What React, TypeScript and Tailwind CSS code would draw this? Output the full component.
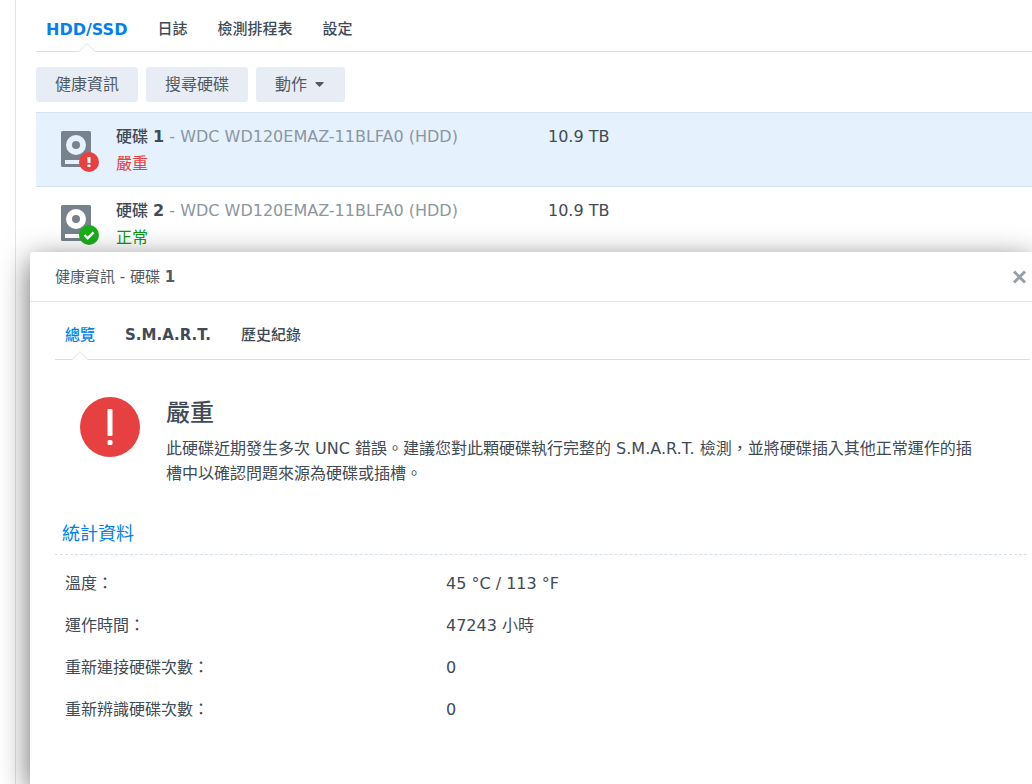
import React, { useState } from 'react';

type Status = 'critical' | 'normal';

interface Disk {
  id: number;
  model: string;
  size: string;
  status: Status;
}

interface TabItem {
  label: string;
  className?: string;
}

const disks: Disk[] = [
  { id: 1, model: 'WDC WD120EMAZ-11BLFA0 (HDD)', size: '10.9 TB', status: 'critical' },
  { id: 2, model: 'WDC WD120EMAZ-11BLFA0 (HDD)', size: '10.9 TB', status: 'normal' },
];

const stats = [
  { label: '溫度：', value: '45 °C / 113 °F' },
  { label: '運作時間：', value: '47243 小時' },
  { label: '重新連接硬碟次數：', value: '0' },
  { label: '重新辨識硬碟次數：', value: '0' },
];

const pageTabs: TabItem[] = [
  { label: 'HDD/SSD', className: 'text-base font-bold' },
  { label: '日誌' },
  { label: '檢測排程表' },
  { label: '設定' },
];

const dialogTabs: TabItem[] = [
  { label: '總覽' },
  { label: 'S.M.A.R.T.', className: 'text-[15px] font-bold' },
  { label: '歷史紀錄' },
];

const DiskIcon: React.FC<{ status: Status }> = ({ status }) => (
  <svg width="40" height="42" viewBox="0 0 40 42" aria-hidden="true">
    {/* platter ring and label strip are cut out so the row colour shows through */}
    <path
      fillRule="evenodd"
      fill="#78828c"
      d="M2.500 1h27a1.500 1.500 0 0 1 1.500 1.500v33a1.500 1.500 0 0 1-1.500 1.500h-27a1.500 1.500 0 0 1-1.500-1.500v-33a1.500 1.500 0 0 1 1.500-1.500zM16 5a10 10 0 1 0 0 20a10 10 0 1 0 0-20zM5 30v4h22v-4z"
    />
    <circle cx="16" cy="15" r="4" fill="#78828c" />
    {status === 'critical' ? (
      <>
        <circle cx="29" cy="32" r="10" fill="#e64040" />
        <rect x="27.500" y="27" width="3" height="6" rx="0.5" fill="#fff" />
        <rect x="27.500" y="34.500" width="3" height="2.500" rx="0.5" fill="#fff" />
      </>
    ) : (
      <>
        <circle cx="29" cy="31" r="10" fill="#19af19" />
        <path d="M24.500 31l3.200 3.200 5.800-5.800" fill="none" stroke="#fff" strokeWidth="2.4" />
      </>
    )}
  </svg>
);

const Tabs: React.FC<{ items: TabItem[]; className?: string }> = ({ items, className = '' }) => {
  const [active, setActive] = useState(0);

  return (
    <div role="tablist" className={`flex border-b border-[#d7e1eb] px-[10px] ${className}`}>
      {items.map((item, i) => (
        <button
          key={item.label}
          role="tab"
          aria-selected={i === active}
          onClick={() => setActive(i)}
          className={`relative flex h-full items-center ${item.className ?? 'text-[15px] font-medium'} ${i === active ? 'text-[#057feb]' : 'text-[#414b55]'}`}
        >
          {item.label}
          {i === active && (
            <svg
              className="absolute -bottom-px left-1/2 -translate-x-1/2"
              width="18"
              height="10"
              viewBox="0 0 18 10"
              aria-hidden="true"
            >
              <path d="M1.500 9.500h15" stroke="#fff" />
              <path d="M0 9.500h1L9 1.500l8 8h1" fill="#fff" stroke="#d7e1eb" />
            </svg>
          )}
        </button>
      ))}
    </div>
  );
};

const ToolbarButton: React.FC<{ children: React.ReactNode }> = ({ children }) => (
  <button className="flex h-[35px] items-center rounded-[3px] bg-[#e8edf5] px-[19px] text-[#505a64]">
    {children}
  </button>
);

const DiskTable: React.FC = () => (
  <table className="w-full table-fixed border-collapse">
    <colgroup>
      <col className="w-20" />
      <col className="w-[432px]" />
      <col />
    </colgroup>
    <tbody>
      {disks.map((disk) => (
        <tr
          key={disk.id}
          className={`h-[74px] border-y border-[#d2e2ee] align-top ${disk.id === 1 ? 'bg-[#e5f1fd]' : 'bg-white'}`}
        >
          <td className="pt-[17px] pl-6">
            <DiskIcon status={disk.status} />
          </td>
          <td className="pt-[10px] leading-[27px]">
            <div className="whitespace-nowrap text-[#8c96a0]">
              <span className="font-medium text-[#414b55]">
                硬碟 <b>{disk.id}</b>
              </span>{' '}
              - {disk.model}
            </div>
            <div className={disk.status === 'critical' ? 'text-[#e64040]' : 'text-[#0c9b0c]'}>
              {disk.status === 'critical' ? '嚴重' : '正常'}
            </div>
          </td>
          <td className="pt-[10px] leading-[27px]">{disk.size}</td>
        </tr>
      ))}
    </tbody>
  </table>
);

const HealthDialog: React.FC = () => (
  <section
    role="dialog"
    aria-labelledby="health-title"
    className="absolute top-[252px] right-0 bottom-0 left-[30px] rounded-tl-[3px] bg-white shadow-[0_8px_30px_rgba(0,0,0,0.6)]"
  >
    <header className="flex h-[50px] items-center justify-between border-b border-[#e1e6eb] pr-[5px] pl-[25px]">
      <h2 id="health-title" className="pt-[2px] text-[15px] text-[#505a64]">
        健康資訊 - 硬碟 <b>1</b>
      </h2>
      <button aria-label="關閉">
        <svg width="15" height="14" viewBox="0 0 15 14" aria-hidden="true">
          <path d="M2 1.500l11 11M13 1.500l-11 11" stroke="#96a0aa" strokeWidth="3" />
        </svg>
      </button>
    </header>

    <div className="pl-[25px]">
      <Tabs items={dialogTabs} className="mt-2 mr-[2px] h-[50px] gap-[30px] pt-[2px]" />

      <div className="mt-[37px] flex pr-12 pl-[25px]">
        <svg className="shrink-0" width="60" height="60" viewBox="0 0 60 60" aria-hidden="true">
          <circle cx="30" cy="30" r="30" fill="#e64040" />
          <rect x="27.500" y="12" width="5" height="27" rx="1" fill="#fff" />
          <rect x="27.500" y="43" width="5" height="5" rx="1.500" fill="#fff" />
        </svg>
        <div className="ml-[26px]">
          <h3 className="text-2xl leading-8 font-medium">嚴重</h3>
          <p className="mt-[7px] leading-[25px]">
            此硬碟近期發生多次 UNC 錯誤。建議您對此顆硬碟執行完整的 S.M.A.R.T. 檢測，並將硬碟插入其他正常運作的插槽中以確認問題來源為硬碟或插槽。
          </p>
        </div>
      </div>

      <h3 className="mt-8 mr-[5px] border-b border-dashed border-[#d7e1eb] pb-1 pl-[7px] text-[18px] leading-8 text-[#057feb]">
        統計資料
      </h3>
      <table className="mt-2 w-full table-fixed">
        <colgroup>
          <col className="w-[391px]" />
          <col />
        </colgroup>
        <tbody>
          {stats.map((stat) => (
            <tr key={stat.label} className="h-[42px]">
              <th scope="row" className="pl-[10px] text-left font-normal">{stat.label}</th>
              <td>{stat.value}</td>
            </tr>
          ))}
        </tbody>
      </table>
    </div>
  </section>
);

const App: React.FC = () => (
  <div
    lang="zh-Hant"
    className="relative h-screen overflow-hidden bg-white pl-[15px] font-['DejaVu_Sans','Noto_Sans_CJK_TC',sans-serif] text-base text-[#414b55]"
  >
    <main className="h-full border-l border-[#dce4ed] pl-5">
      <Tabs items={pageTabs} className="h-[52px] gap-[30px] pt-2" />
      <div className="flex gap-2 pt-[15px] pb-[10px]">
        <ToolbarButton>健康資訊</ToolbarButton>
        <ToolbarButton>搜尋硬碟</ToolbarButton>
        <ToolbarButton>
          動作
          <svg className="mr-[2px] ml-2" width="9" height="5" viewBox="0 0 9 5" aria-hidden="true">
            <path d="M0.500 0h8v1L4.500 5l-4-4z" fill="#505a64" />
          </svg>
        </ToolbarButton>
      </div>
      <DiskTable />
    </main>
    <HealthDialog />
  </div>
);

export default App;
